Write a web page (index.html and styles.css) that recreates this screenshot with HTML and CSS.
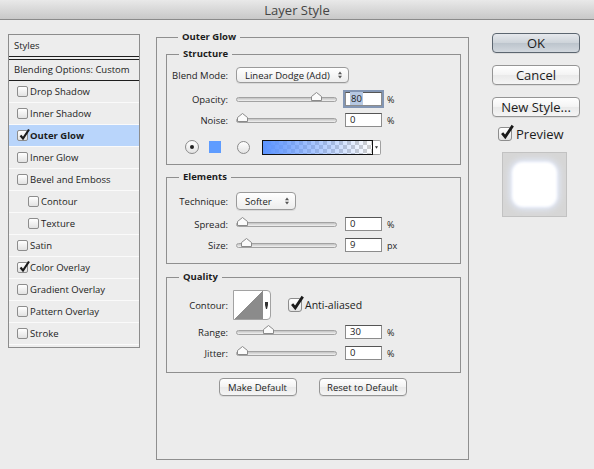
FILE: index.html
```html
<!DOCTYPE html>
<html lang="en">
<head>
    <meta charset="UTF-8">
    <title>Layer Style</title>
    <link rel="stylesheet" href="styles.css">
</head>
<body>
    <div class="titlebar">Layer Style</div>
    <div class="dialog">
        <!-- 左侧样式列表 -->
        <div class="styles-list">
            <div class="list-head">Styles</div>
            <div class="list-blend">Blending Options: Custom</div>
            <div class="list-item"><span class="cb"></span>Drop Shadow</div>
            <div class="list-item"><span class="cb"></span>Inner Shadow</div>
            <div class="list-item active"><span class="cb"><svg class="tick" viewBox="0 0 12 12"><path d="M2.5 6.5 L5 9.5 L11 0.5"/></svg></span><b>Outer Glow</b></div>
            <div class="list-item"><span class="cb"></span>Inner Glow</div>
            <div class="list-item"><span class="cb"></span>Bevel and Emboss</div>
            <div class="list-item indent"><span class="cb"></span>Contour</div>
            <div class="list-item indent"><span class="cb"></span>Texture</div>
            <div class="list-item"><span class="cb"></span>Satin</div>
            <div class="list-item"><span class="cb"><svg class="tick" viewBox="0 0 12 12"><path d="M2.5 6.5 L5 9.5 L11 0.5"/></svg></span>Color Overlay</div>
            <div class="list-item"><span class="cb"></span>Gradient Overlay</div>
            <div class="list-item"><span class="cb"></span>Pattern Overlay</div>
            <div class="list-item"><span class="cb"></span>Stroke</div>
        </div>

        <fieldset class="outer">
            <legend>Outer Glow</legend>

            <fieldset class="sub structure">
                <legend>Structure</legend>
                <div class="row m7">
                    <span class="lbl">Blend Mode:</span>
                    <div class="popup blend"><span>Linear Dodge (Add)</span><svg class="updown" viewBox="0 0 5 10"><path d="M0 4 L2.5 0.5 L5 4Z M0 6 L2.5 9.5 L5 6Z"/></svg></div>
                </div>
                <div class="row m8">
                    <span class="lbl">Opacity:</span>
                    <div class="slider"><div class="rail"><svg class="thumb" style="left:84%" viewBox="0 0 11 9"><path d="M0.5 8.5 V4.5 L5.5 0.5 L10.5 4.5 V8.5 Z"/></svg></div></div>
                    <div class="field focus"><span class="sel">80</span></div><span class="unit">%</span>
                </div>
                <div class="row m5">
                    <span class="lbl">Noise:</span>
                    <div class="slider"><div class="rail"><svg class="thumb" style="left:0%" viewBox="0 0 11 9"><path d="M0.5 8.5 V4.5 L5.5 0.5 L10.5 4.5 V8.5 Z"/></svg></div></div>
                    <div class="field">0</div><span class="unit">%</span>
                </div>
                <div class="row m11 color-row">
                    <span class="radio on"></span>
                    <span class="swatch"></span>
                    <span class="radio off"></span>
                    <div class="grad">
                        <span class="grad-bar"></span>
                        <span class="grad-arrow"><svg viewBox="0 0 5 4"><path d="M0 0 H5 L2.5 4Z"/></svg></span>
                    </div>
                </div>
            </fieldset>

            <fieldset class="sub elements">
                <legend>Elements</legend>
                <div class="row tall m9">
                    <span class="lbl">Technique:</span>
                    <div class="popup technique"><span>Softer</span><svg class="updown" viewBox="0 0 5 10"><path d="M0 4 L2.5 0.5 L5 4Z M0 6 L2.5 9.5 L5 6Z"/></svg></div>
                </div>
                <div class="row m6">
                    <span class="lbl">Spread:</span>
                    <div class="slider"><div class="rail"><svg class="thumb" style="left:0%" viewBox="0 0 11 9"><path d="M0.5 8.5 V4.5 L5.5 0.5 L10.5 4.5 V8.5 Z"/></svg></div></div>
                    <div class="field">0</div><span class="unit">%</span>
                </div>
                <div class="row m5">
                    <span class="lbl">Size:</span>
                    <div class="slider"><div class="rail"><svg class="thumb" style="left:4%" viewBox="0 0 11 9"><path d="M0.5 8.5 V4.5 L5.5 0.5 L10.5 4.5 V8.5 Z"/></svg></div></div>
                    <div class="field">9</div><span class="unit">px</span>
                </div>
            </fieldset>

            <fieldset class="sub quality">
                <legend>Quality</legend>
                <div class="row contour-row m7">
                    <span class="lbl short">Contour:</span>
                    <div class="contour">
                        <span class="curve"></span>
                        <span class="contour-arrow"><svg viewBox="0 0 3 7"><path d="M0 0 H3 V3 L2 7 H1 L0 3Z"/></svg></span>
                    </div>
                    <span class="cb big"><svg class="tick" viewBox="0 0 12 12"><path d="M2.5 6.5 L5 9.5 L11 0.5"/></svg></span>
                    <span class="aa">Anti-aliased</span>
                </div>
                <div class="row m4">
                    <span class="lbl">Range:</span>
                    <div class="slider"><div class="rail"><svg class="thumb" style="left:30%" viewBox="0 0 11 9"><path d="M0.5 8.5 V4.5 L5.5 0.5 L10.5 4.5 V8.5 Z"/></svg></div></div>
                    <div class="field">30</div><span class="unit">%</span>
                </div>
                <div class="row m5">
                    <span class="lbl">Jitter:</span>
                    <div class="slider"><div class="rail"><svg class="thumb" style="left:0%" viewBox="0 0 11 9"><path d="M0.5 8.5 V4.5 L5.5 0.5 L10.5 4.5 V8.5 Z"/></svg></div></div>
                    <div class="field">0</div><span class="unit">%</span>
                </div>
            </fieldset>

            <div class="defaults">
                <button class="btn make">Make Default</button>
                <button class="btn reset">Reset to Default</button>
            </div>
        </fieldset>

        <!-- 右侧按钮 -->
        <div class="side">
            <button class="btn big-btn ok">OK</button>
            <button class="btn big-btn">Cancel</button>
            <button class="btn big-btn">New Style...</button>
            <div class="preview-row">
                <span class="cb big"><svg class="tick" viewBox="0 0 12 12"><path d="M2.5 6.5 L5 9.5 L11 0.5"/></svg></span>
                <span>Preview</span>
            </div>
            <div class="preview-box"><div class="glow"></div></div>
        </div>
    </div>
</body>
</html>
```

FILE: styles.css
```css
body {
    margin: 0;
    width: 594px;
    height: 469px;
    overflow: hidden;
    background: #ececec;
    font-family: "Lucida Grande", "Open Sans", "Liberation Sans", sans-serif;
    font-size: 9.5px;
    color: #1c1c1c;
}
.titlebar {
    height: 19px;
    line-height: 20px;
    border-bottom: 1px solid #8a8a8a;
    background: linear-gradient(#e9e9e9, #c8c8c8);
    text-align: center;
    font-size: 13px;
    color: #444;
}
.dialog {
    display: flex;
    align-items: flex-start;
    padding-left: 8px;
}
/* 样式列表 */
.styles-list {
    width: 132px;
    height: 314px;
    box-sizing: border-box;
    margin-top: 14px;
    border: 1px solid #8c8c8c;
    background: #ededed;
}
.list-head {
    height: 21px;
    line-height: 21px;
    padding-left: 5px;
    border-bottom: 4px double #1e1e1e;
}
.list-blend {
    height: 20px;
    line-height: 20px;
    padding-left: 5px;
    border-bottom: 1px solid #1e1e1e;
}
.list-item {
    height: 21px;
    display: flex;
    align-items: center;
    gap: 2px;
    padding-left: 8px;
    border-bottom: 1px solid #fafafa;
}
.list-item b {
    font-weight: bold;
}
.list-item.indent {
    padding-left: 19px;
}
.list-item.active {
    background: #b9d5fb;
}
.cb {
    position: relative;
    flex: none;
    width: 11px;
    height: 11px;
    box-sizing: border-box;
    border: 1px solid #8d8d8d;
    border-radius: 2px;
    background: linear-gradient(#ffffff, #e2e2e2);
}
.cb.big {
    width: 14px;
    height: 14px;
    border-radius: 3px;
}
.tick {
    position: absolute;
    left: 0;
    top: -2px;
    width: 12px;
    height: 12px;
    overflow: visible;
}
.cb.big .tick {
    width: 15px;
    height: 15px;
    top: -3px;
}
.tick path {
    fill: none;
    stroke: #1a1a1a;
    stroke-width: 2.2;
}
/* 分组框 */
fieldset {
    margin: 0;
    padding: 0;
    min-width: 0;
    box-sizing: border-box;
    border: 1px solid #8f8f8f;
}
legend {
    font-weight: bold;
    line-height: 12px;
    padding: 0 4px;
}
.outer {
    width: 313px;
    height: 429px;
    margin: 11px 0 0 16px;
}
.outer > legend {
    margin-left: 21px;
}
.sub {
    margin: 0 7px 0 9px;
}
.sub > legend {
    margin-left: 12px;
}
.structure {
    margin-top: 5px;
    padding-bottom: 9px;
}
.elements {
    margin-top: 6px;
    padding-bottom: 10px;
}
.quality {
    margin-top: 7px;
    padding-bottom: 11px;
}
.row {
    display: flex;
    align-items: center;
    height: 16px;
}
.row.tall {
    height: 18px;
}
.m4 { margin-top: 4px; }
.m5 { margin-top: 5px; }
.m6 { margin-top: 6px; }
.m7 { margin-top: 7px; }
.m8 { margin-top: 8px; }
.m9 { margin-top: 9px; }
.m11 { margin-top: 11px; }
.lbl {
    flex: none;
    width: 61px;
    margin-right: 8px;
    text-align: right;
}
.lbl.short {
    margin-right: 5px;
}
.popup {
    display: flex;
    align-items: center;
    justify-content: space-between;
    height: 16px;
    box-sizing: border-box;
    padding: 0 6px 0 8px;
    border: 1px solid #9a9a9a;
    border-radius: 4px;
    background: linear-gradient(#ffffff, #ededed);
    box-shadow: 0 1px 0 rgba(0,0,0,0.08);
}
.popup.blend {
    width: 113px;
}
.popup.technique {
    width: 60px;
    height: 18px;
}
.updown {
    width: 4px;
    height: 8px;
}
.updown path {
    fill: #555;
}
.slider {
    position: relative;
    flex: none;
    width: 101px;
    height: 5px;
    box-sizing: border-box;
    margin-right: 8px;
    border: 1px solid #a2a2a2;
    border-radius: 3px;
    background: linear-gradient(#c2c2c2, #f2f2f2);
}
.slider .rail {
    position: absolute;
    left: 0;
    right: 11px;
    top: -6px;
    height: 9px;
}
.thumb {
    position: absolute;
    top: 0;
    width: 11px;
    height: 9px;
}
.thumb path {
    fill: #fbfbfb;
    stroke: #8a8a8a;
    stroke-width: 1;
}
.field {
    flex: none;
    width: 37px;
    height: 14px;
    box-sizing: border-box;
    margin-right: 5px;
    padding-left: 4px;
    line-height: 12px;
    border: 1px solid #8c8c8c;
    border-top-color: #555;
    background: #fff;
}
.field.focus {
    box-shadow: 0 0 0 2px #8396b4;
}
.field .sel {
    background: #b6c8e2;
    padding: 0 1px;
}
.unit {
    font-size: 9px;
}
/* 颜色行 */
.color-row {
    padding-left: 18px;
}
.radio {
    position: relative;
    flex: none;
    width: 14px;
    height: 14px;
    box-sizing: border-box;
    border: 1px solid #8a8a8a;
    border-radius: 50%;
    background: linear-gradient(#ffffff, #e3e3e3);
}
.radio.on::after {
    content: "";
    position: absolute;
    left: 4px;
    top: 4px;
    width: 4px;
    height: 4px;
    border-radius: 50%;
    background: #222;
}
.radio.off {
    width: 13px;
    height: 13px;
}
.swatch {
    flex: none;
    width: 12px;
    height: 12px;
    margin: 0 16px 0 10px;
    background: #5e9cff;
}
.grad {
    display: flex;
    margin-left: 12px;
    height: 15px;
}
.grad-bar {
    width: 111px;
    box-sizing: border-box;
    border: 1px solid #111;
    background:
        linear-gradient(90deg, #5b93ff, rgba(91,147,255,0)),
        conic-gradient(#cfcfcf 25%, #fff 0 50%, #cfcfcf 0 75%, #fff 0) 0 0 / 8px 8px;
}
.grad-arrow {
    display: flex;
    align-items: center;
    justify-content: center;
    width: 8px;
    box-sizing: border-box;
    border: 1px solid #a0a0a0;
    border-left: none;
    border-radius: 0 2px 2px 0;
    background: #fff;
}
.grad-arrow svg {
    width: 3px;
    height: 3px;
}
.grad-arrow path {
    fill: #333;
}
/* 等高线 */
.contour-row {
    height: 30px;
}
.contour {
    display: flex;
    width: 38px;
    height: 30px;
    box-sizing: border-box;
    margin-right: 17px;
    border: 1px solid #a2a2a2;
    border-radius: 0 4px 4px 0;
    background: #fff;
}
.curve {
    width: 29px;
    background: linear-gradient(to top left, #8b8b8b 50%, #fff 50%);
}
.contour-arrow {
    display: flex;
    align-items: center;
    justify-content: center;
    flex: 1;
}
.contour-arrow svg {
    width: 3px;
    height: 7px;
}
.contour-arrow path {
    fill: #333;
}
.aa {
    margin-left: 3px;
    font-size: 10.5px;
}
/* 按钮 */
.btn {
    display: block;
    box-sizing: border-box;
    padding: 0;
    border: 1px solid #959595;
    border-radius: 4px;
    background: linear-gradient(#ffffff, #f3f3f3 50%, #e9e9e9 50%, #f5f5f5);
    box-shadow: 0 1px 0 rgba(0,0,0,0.07);
    font-family: inherit;
    font-size: 9.5px;
    color: #1c1c1c;
}
.defaults {
    display: flex;
    justify-content: center;
    gap: 22px;
    margin-top: 5px;
}
.btn.make {
    width: 78px;
    height: 18px;
}
.btn.reset {
    width: 88px;
    height: 18px;
}
.side {
    width: 88px;
    margin: 13px 0 0 23px;
}
.btn.big-btn {
    width: 88px;
    height: 20px;
    margin-bottom: 12px;
    font-size: 13px;
}
.btn.ok {
    border-color: #5c6670;
    background: linear-gradient(#e6e9ed, #cdd3d9 50%, #bcc4cc 50%, #d2d8de);
}
.preview-row {
    display: flex;
    align-items: center;
    gap: 4px;
    height: 14px;
    margin: -2px 0 0 6px;
    font-size: 13px;
}
.preview-box {
    display: flex;
    align-items: center;
    justify-content: center;
    width: 65px;
    height: 65px;
    box-sizing: border-box;
    margin: 11px 0 0 10px;
    border: 1px solid #c2c2c2;
    background: #d6d6d6;
}
.glow {
    width: 41px;
    height: 41px;
    border-radius: 9px;
    background: #fff;
    box-shadow: 0 0 3px 2px #fff, 0 0 7px 4px #e4ecff;
}
```
